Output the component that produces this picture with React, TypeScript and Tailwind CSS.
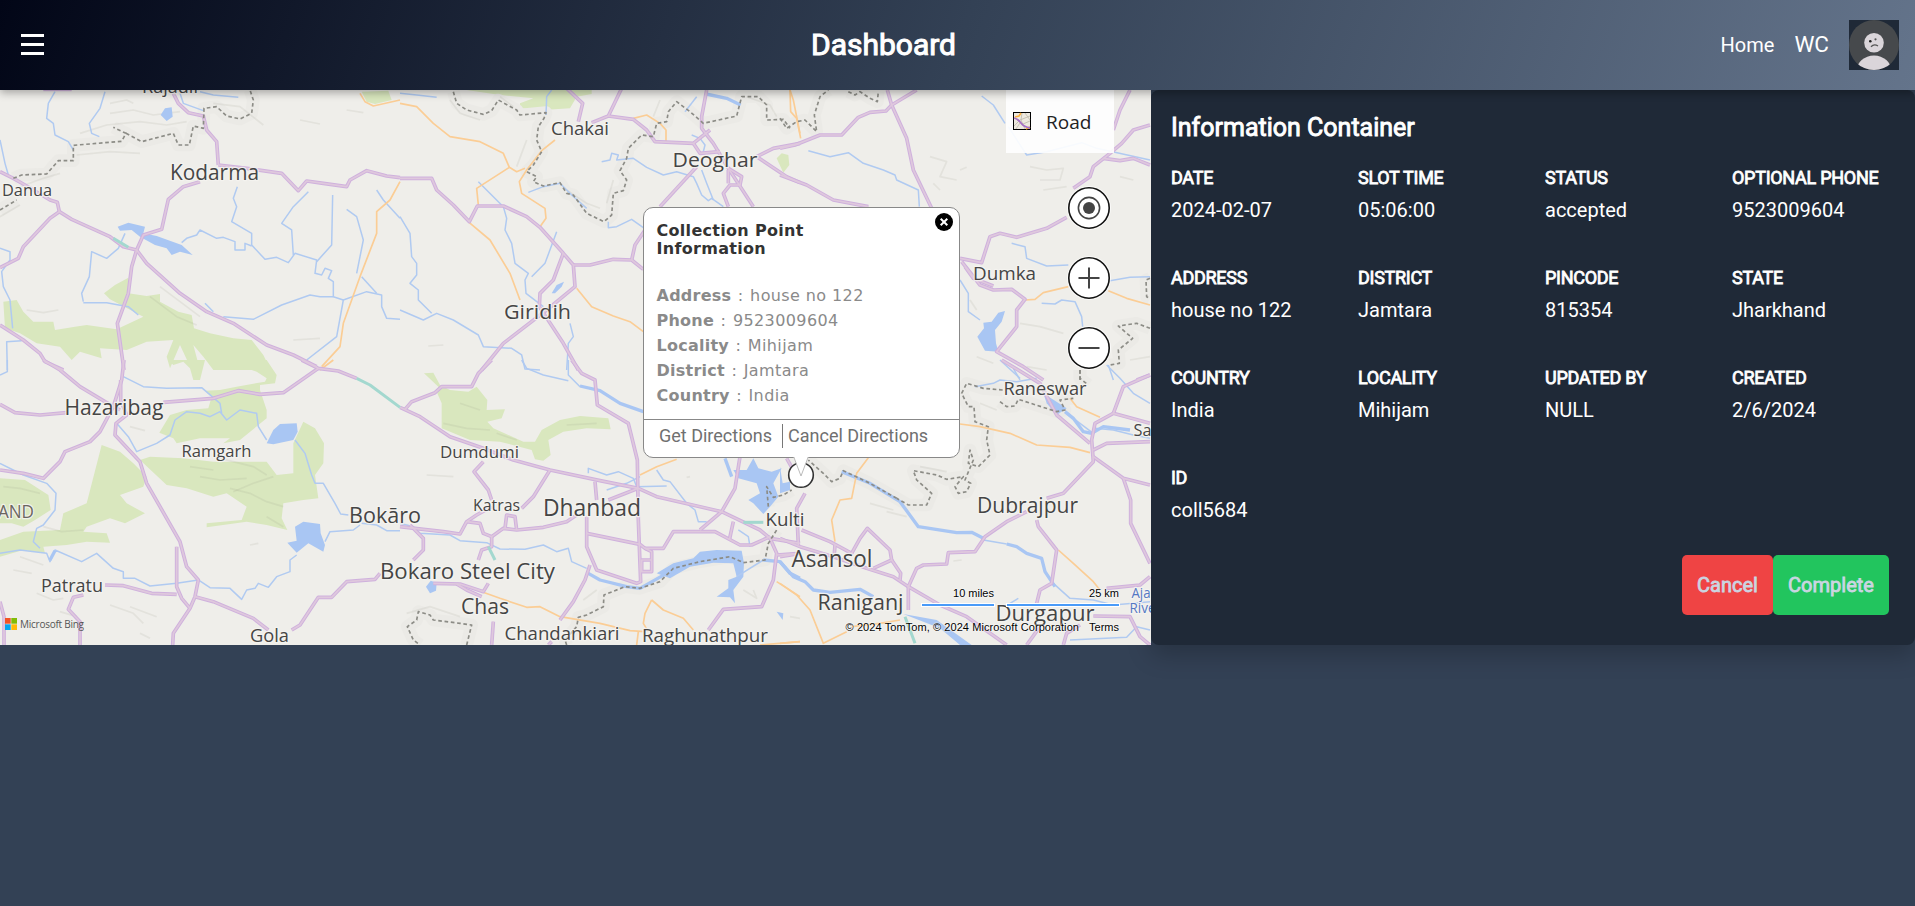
import React from "react";

type Tile = {
  x: number;
  y: number;
  parks?: string[];
  lakes?: string[];
  rivers?: string[];
  wideRivers?: string[];
  minor?: string[];
  roads?: string[];
  motorway?: string[];
  borders?: string[];
  relief?: string[];
};

/* Map geometry, one entry per tile. Tile units are a third of a pixel. */
const tiles: Tile[] = [
  {
    x: 0,
    y: 0,
    relief: [
      "M330 340 L400 330 460 345 540 335",
      "M240 400 L320 375 420 365 500 375 560 365",
      "M330 310 L380 300 400 310",
      "M230 465 L330 455 420 460",
      "M60 560 L130 535 180 520",
      "M0 650 L60 615",
      "M640 310 L720 320 790 375",
      "M80 930 L130 938 175 930",
      "M480 860 L560 920 600 950",
      "M450 890 L530 950 590 975",
      "M900 360 L960 372",
      "M1040 330 L1090 338",
      "M880 1020 L960 1015",
    ],
    parks: [
      "M312 880 L345 855 385 833 390 865 385 880 440 888 480 882 480 905 535 935 575 945 582 985 630 1000 700 1015 755 1020 790 1065 812 1110 L640 1110 610 1070 580 1035 600 1110 575 1110 540 1035 510 1105 500 1070 520 1020 440 1025 380 1050 300 1045 305 1075 240 1055 215 1080 180 1040 110 1030 60 1000 15 985 10 905 50 900 70 935 100 965 160 965 165 990 225 980 260 975 350 988 430 950 330 898Z",
      "M1085 275 L1100 305 1125 312 1175 300 1165 272Z",
    ],
    lakes: [
      "M482 345 L495 325 515 322 518 350 500 363Z",
      "M353 680 L385 668 435 680 430 700 470 708 545 735 578 765 540 755 515 765 500 745 465 735 420 710 395 690 360 692Z",
    ],
    rivers: [
      "M165 275 L145 310 140 355 160 370 165 405 205 425 220 450",
      "M315 275 L300 325 268 370 275 400 298 410",
      "M540 280 L550 310 610 332",
      "M0 420 L15 490 25 525",
      "M0 745 L30 755 30 780 5 815 10 860 30 900 38 985",
      "M65 1022 L20 1025 22 1110",
      "M375 700 L355 745 320 775 275 755 268 830 245 880 250 905",
      "M250 908 L320 908 385 920 415 945",
      "M600 275 L640 285 715 292",
      "M545 728 L560 715 590 705 600 690 650 715 670 712 705 725 705 750 735 750 735 730 755 738",
      "M712 560 L700 595 710 620 695 665 755 700 755 735 795 778 830 772 865 788 885 760 950 780 945 820 965 825 975 805 995 812 985 835 1000 845 1000 890 1030 900 1100 875 1145 885 1145 920 1160 955 1200 958",
      "M925 575 L880 620 845 670 875 690 880 765",
      "M998 585 L995 735 950 785",
      "M1040 628 L1070 650 1090 720 1070 820",
      "M1130 570 L1150 600 1200 655",
      "M670 950 L760 958 845 915 930 885 960 890 1000 890",
      "M1030 900 L1010 1010 920 1080",
      "M1085 830 L1130 880",
      "M615 910 L640 935",
    ],
    minor: [
      "M1080 280 L1095 305 1120 318 1200 300",
      "M1200 545 L1170 600 1130 635 1130 700 1080 830 1030 970 1020 1040 965 1100",
    ],
    roads: [
      "M0 515 L40 535 75 555 150 600 172 607 178 635 215 658 330 710 370 740 410 750",
      "M178 635 L150 655 70 740 55 775 0 803",
      "M520 280 L535 310 565 338 610 348 620 390 650 425 655 495",
      "M600 545 L550 560 505 598 485 688 430 705 410 750",
      "M410 750 L395 800 385 880 352 970 372 1110",
      "M410 750 L440 790 540 880 620 935 700 970 800 1035 880 1065 950 1100",
      "M655 495 L740 505 845 520 895 572 920 543 970 550 1040 560 1050 540 1100 512 1160 528 1200 533",
      "M0 975 L70 1020 120 1060 135 1085 190 1110",
      "M130 268 L215 268",
    ],
    motorway: ["M340 715 L385 742"],
    borders: [
      "M0 630 L50 600",
      "M40 535 L65 525 140 522 175 482 220 482 220 436 365 424 378 400 340 382",
      "M378 400 L425 425 520 400 535 435 568 435 580 378 610 385 612 325 650 320 680 348 720 357 755 340 760 300 750 270",
    ],
  },
  {
    x: 400,
    y: 80,
    relief: [
      "M150 60 L180 100 240 120",
      "M380 180 L350 260",
      "M500 330 L560 370 600 385",
      "M640 300 L620 370",
      "M780 60 L760 110",
      "M340 80 L300 50",
      "M1040 50 L1110 75 1130 110",
      "M85 798 L130 795",
    ],
    parks: [
      "M200 30 L575 30 575 42 530 50 510 85 430 90 360 85 360 70 400 55 300 45Z",
      "M1130 235 L1145 220 1165 225 1168 255 1150 278Z",
    ],
    lakes: ["M455 640 L470 615 492 605 485 620 465 640Z"],
    rivers: [
      "M0 40 L50 45 110 52",
      "M455 30 L440 50 438 105",
      "M605 245 L630 240 635 220 655 225 650 240 700 235 740 262 790 285 830 275 880 290 890 310 905 345 925 362 935 355 970 380",
      "M905 270 L920 310 940 360",
      "M875 165 L900 175 915 195 910 215",
      "M385 337 L430 320 480 310 515 345 560 385",
      "M625 425 L625 443 650 440 695 418 730 443",
      "M235 305 L310 380 320 415 315 450 335 490 345 550 385 580 375 600 378 640 430 680",
      "M470 455 L435 550 395 590",
      "M0 410 L30 460 35 530 50 550 50 585 30 610 55 630 55 660 95 700",
      "M0 690 L70 720 110 700 160 720 235 765 250 800 335 805 365 825 375 867 420 870",
      "M510 730 L520 770 505 790 500 870",
      "M890 50 L855 95",
    ],
    wideRivers: ["M918 42 L980 55 1022 75"],
    minor: [
      "M0 70 L50 80 100 130 150 170 240 185 310 220 328 262 230 325 235 375",
      "M328 262 L350 275 375 265",
      "M465 180 L425 212 380 270 358 305 365 340 435 385 438 415 420 440",
      "M208 428 L270 480 330 580 360 660",
      "M700 115 L740 105 780 130 798 150 798 185",
      "M530 625 L575 680 640 708 690 725 730 755",
      "M1170 30 L1180 60 1200 160",
    ],
    roads: [
      "M0 295 L95 295 110 330 160 375 208 425 232 378 310 378 380 410 420 442 490 520 520 555 525 620 440 690 310 790 245 870",
      "M490 520 L460 600 420 640 418 680 490 790 535 870",
      "M520 555 L570 555 640 538 695 540 730 568",
      "M695 540 L705 495 735 450",
      "M500 25 L548 70 535 125",
      "M665 25 L625 108 575 128",
      "M625 108 L700 118 740 150 765 185 880 190 930 150",
      "M920 30 L905 110 905 145 940 190 985 265 1060 380",
      "M890 260 L780 380",
      "M985 265 L1025 290 1020 315 990 315 970 340 985 380",
      "M985 270 L985 310",
      "M1070 230 L1120 205 1200 190",
      "M1070 230 L1160 290 1200 308",
      "M880 190 L900 220 960 215",
    ],
    borders: [
      "M160 35 L170 70 200 90 250 103 275 92 295 60 350 90 360 105 438 98 432 115 415 140 410 180 425 215 400 255 380 275 410 290 400 305 430 318 480 308 500 340 520 345 560 400 612 425 635 405 640 340 670 332 680 300 660 272 680 235 685 205 725 165 760 170 770 130 800 125 805 95 830 65 870 95 910 130 1010 108 1025 50 1075 50 1100 75 1100 120 1150 118 1170 145",
    ],
  },
  {
    x: 0,
    y: 360,
    relief: [
      "M60 590 L130 615",
      "M640 290 L760 320 800 345",
      "M600 350 L660 360 740 355",
      "M700 395 L760 370 820 350",
      "M690 385 L750 400 800 425 850 440",
      "M570 320 L640 330",
      "M800 470 L850 500",
      "M750 555 L775 550",
      "M180 755 L230 770",
      "M330 735 L400 760 430 790",
      "M390 740 L470 770",
      "M420 820 L450 835",
      "M130 500 L185 515 250 510",
      "M10 380 L60 385 120 400",
      "M390 200 L435 212",
      "M110 700 L160 720 190 715",
      "M40 630 L95 640",
    ],
    parks: [
      "M505 0 L520 15 550 5 570 25 580 60 600 60 615 0Z",
      "M640 0 L660 20 720 18 770 35 800 55 795 65 710 80 660 90 615 92 635 110 625 145 560 150 510 165 478 218 520 235 530 250 600 235 690 235 670 250 720 240 800 175 800 150 780 90 780 75 825 70 830 45 800 0Z",
      "M305 255 L360 275 400 310 440 350 430 380 360 405 380 430 435 460 375 490 330 475 260 500 250 515 320 520 330 548 260 545 200 555 130 560 135 580 70 570 0 590 0 540 70 515 180 510 190 460 260 430Z",
      "M420 300 L450 290 550 295 640 305 800 305 830 345 880 340 880 250 910 185 945 205 972 250 970 310 945 345 955 415 910 420 850 430 845 475 862 510 800 495 740 485 620 502 620 490 725 480 740 440 680 400 640 410 560 385 500 375Z",
      "M0 355 L75 360 145 405 152 450 105 480 70 500 35 490 0 490Z",
    ],
    lakes: [
      "M800 250 L820 210 840 192 890 190 893 215 880 240 820 253Z",
      "M862 548 L890 542 885 500 910 485 960 492 962 520 975 555 970 575 925 550 890 578Z",
    ],
    rivers: [
      "M0 45 L22 35 22 0",
      "M370 50 L430 80 500 85 605 83 660 130 665 160",
      "M350 190 L385 230 410 275 470 250 510 225 525 180 560 155 600 160 630 170 660 155 680 180 720 150 770 160 775 200 800 240",
      "M885 240 L915 280 935 345 945 370 970 370 1005 430 1022 462 1045 465",
      "M1080 495 L1060 510 990 515 975 545",
      "M0 310 L70 345 140 370 168 400 165 450 130 495 110 505 100 545 120 565",
      "M0 580 L60 570 140 580 150 605 165 570 245 605 290 580 340 625 370 635 370 655 405 655 450 678 530 670 595 660 630 683 690 685 725 718 740 690 765 685 775 670 805 682 830 650 870 635 870 600 890 585",
      "M1085 490 L1130 495 1160 512 1200 512",
    ],
    wideRivers: ["M165 572 L150 600"],
    minor: ["M1000 0 L960 30"],
    roads: [
      "M130 0 L180 30 240 80 315 125 360 150",
      "M372 0 L365 60 340 140 300 215 270 245 195 275 180 305 130 355 70 340 0 330",
      "M362 60 L362 120 380 165 348 190 345 225 420 305 440 370 480 440 540 545 560 620 595 660 585 710 570 745 520 820 518 855",
      "M0 133 L45 158 120 165 200 158",
      "M490 127 L640 115 715 92 780 103 850 98 955 25",
      "M905 0 L955 25 1015 33 1070 55",
      "M530 560 L530 680 545 715 570 745",
      "M315 675 L370 677 455 700 530 703",
      "M585 710 L640 725 760 775 805 810",
      "M250 705 L220 712 205 748 240 785 240 855",
      "M0 725 L12 770 12 855",
      "M875 810 L900 795 955 712 995 712 1040 665 1125 658 1140 640",
    ],
    motorway: ["M1070 55 L1110 75 1200 142"],
  },
  {
    x: 400,
    y: 360,
    relief: [
      "M130 190 L200 205 270 210",
      "M180 130 L240 150",
      "M290 220 L350 240",
      "M500 195 L590 190",
      "M80 345 L160 350",
      "M860 352 L870 350",
      "M1030 690 L1070 715 1060 690",
      "M20 760 L90 740 180 770",
      "M590 690 L550 720",
    ],
    parks: [
      "M72 40 L100 38 120 75 150 90 205 95 230 80 262 120 260 150 315 148 305 175 262 185 280 205 370 245 405 245 425 210 480 180 540 168 625 175 632 208 560 205 490 215 445 240 452 285 430 302 405 298 395 270 300 245 210 240 125 205 125 130 110 95 115 80Z",
    ],
    lakes: [
      "M1000 330 L1040 330 1060 295 1075 325 1115 335 1145 325 1120 370 1135 410 1110 440 1090 462 1060 430 1045 420 1080 400 1070 370 1015 355Z",
      "M770 640 L820 610 880 595 900 575 950 570 1025 572 1032 610 1030 650 1000 690 1005 730 990 712 950 710 985 685 985 660 1010 650 1000 610 940 608 870 620 810 655Z",
      "M78 680 L92 662 110 668 108 692 90 700Z",
      "M1130 755 L1150 760 1148 780Z",
    ],
    rivers: [
      "M365 0 L380 25 430 45 505 62",
      "M505 0 L505 45 540 80",
      "M0 490 L40 500 60 520 150 525 180 542 260 548 300 567 375 568 430 555 470 575 505 565 515 605 560 625",
      "M1015 510 L1045 530 1050 560",
      "M565 340 L565 325 620 345 655 335 700 355 710 380 800 378",
      "M620 390 L680 370 720 350",
      "M770 330 L790 360 810 365 860 430 885 450 895 485 920 485",
      "M1010 650 L1090 600",
    ],
    wideRivers: [
      "M540 78 L600 92 660 130 730 155",
      "M565 640 L600 660 680 680 720 685 800 640",
      "M975 295 L995 350",
      "M1090 600 L1140 605 1170 640 1200 655",
    ],
    minor: [
      "M720 345 L770 320 830 298",
      "M245 695 L300 715 380 742 420 740 480 770 600 790 690 812 735 815",
      "M715 815 L710 855",
      "M755 720 L735 760 730 790 745 815",
      "M755 720 L790 750 850 775 880 810",
      "M1130 665 L1200 710",
      "M1080 855 L1200 845",
    ],
    roads: [
      "M275 0 L235 40 215 80 125 80 105 98 35 125 15 148",
      "M0 142 L60 170 150 230 250 265 340 300 450 330 600 362 715 385 770 410 965 455 1080 510 1110 535 1200 550",
      "M515 0 L545 40 585 60 592 135 685 190 712 300 715 480 722 665 710 670 590 630 560 560 560 470",
      "M250 305 L222 335 265 390 275 420",
      "M450 330 L400 410 365 445",
      "M585 365 L590 420",
      "M715 385 L625 420",
      "M0 500 L70 508 130 515 180 522 200 485 230 465 275 440",
      "M200 485 L240 490 250 520 275 530 310 505 350 510 430 502 500 485 530 465",
      "M315 505 L320 465 345 470 350 510",
      "M275 530 L275 560 245 570 235 600",
      "M30 495 L70 535 70 570 40 600",
      "M560 520 L720 553 735 565 755 575 755 635 725 635 725 600 755 600",
      "M735 565 L790 565 820 515 945 515 1020 555 1055 555 1110 530",
      "M965 455 L900 510",
      "M1000 485 L988 540",
      "M570 615 L555 660 520 725 480 780",
      "M1020 290 L1005 385 965 455",
      "M1110 535 L1130 580 1120 660 1085 740 970 748 925 810",
      "M1130 585 L1200 580",
      "M100 670 L180 672 250 695 265 670",
      "M170 672 L200 690 245 710",
      "M280 785 L275 855",
      "M445 855 L455 845",
      "M1160 295 L1180 330",
    ],
    motorway: ["M265 560 L285 600", "M1030 487 L1090 487"],
    borders: [
      "M200 855 L215 795 180 790 100 780 90 765 55 755 50 780 22 800 40 840 60 855",
      "M500 855 L495 840 530 800 535 772 560 765 610 740 612 705 675 680 720 685 780 665 820 625 900 605 990 590 1030 608 1095 600 1105 550 1130 510",
      "M1105 440 L1100 380 1120 412 1150 405 1175 390",
    ],
  },
  {
    x: 780,
    y: 80,
    relief: [
      "M450 230 L500 245 480 290 530 300",
      "M460 310 L480 330",
      "M540 270 L560 262",
      "M750 260 L800 270 850 265 840 300 780 300",
      "M790 330 L860 320",
      "M1020 290 L1060 300",
      "M570 660 L590 690",
      "M720 730 L780 740 850 760",
      "M590 830 L640 850",
      "M740 860 L800 870",
      "M1050 840 L1110 830",
    ],
    lakes: [
      "M592 770 L612 745 610 728 635 725 655 698 675 693 665 725 645 750 648 790 655 815 615 812Z",
    ],
    rivers: [
      "M85 212 L150 230 205 218 250 250 310 270 345 285 350 300 415 330 418 380",
      "M540 600 L565 640 565 695 600 720",
      "M695 490 L735 500 740 535 800 558 865 555",
      "M785 670 L825 672 845 660 885 665 905 710 908 740",
      "M990 602 L1050 592 1110 590",
      "M685 140 L740 225 800 215 905 188 950 205 1110 240",
      "M605 48 L640 75 675 130",
      "M700 865 L720 900",
      "M985 855 L1000 900",
    ],
    minor: [
      "M30 30 L32 95 50 115 62 175",
      "M735 660 L765 658 790 638 865 620",
      "M985 632 L1040 655 1110 675",
    ],
    roads: [
      "M0 205 L45 195 120 165 185 165 235 112 270 97 318 93 335 75 410 30",
      "M322 30 L335 75 380 175 400 270 455 385",
      "M0 285 L80 315 160 360 265 380",
      "M540 535 L605 548 630 470 660 460 710 472 800 445 860 412",
      "M545 545 L600 615 640 630 695 628 735 658 710 690 710 740 650 815 730 860 790 900",
      "M555 560 L580 595 640 618",
      "M1050 30 L1020 90 1000 150",
      "M1110 135 L1060 150 1025 190 990 220 940 260 930 290 880 325",
      "M970 235 L1020 242 1060 235 1110 255",
      "M1070 900 L1110 885",
    ],
    borders: [
      "M0 115 L20 145 50 125 75 120 110 155 103 105 120 50 145 30",
      "M205 35 L225 45 240 35 270 55 292 65 295 35",
      "M1110 745 L1070 730 1015 738 1058 775 1015 810 1018 850 990 855",
      "M900 870 L900 900",
      "M1110 595 L1098 600 1100 650 1110 655",
    ],
  },
  {
    x: 780,
    y: 360,
    relief: [
      "M270 430 L340 450",
      "M320 455 L380 470",
      "M520 603 L545 600",
      "M30 770 L60 775",
      "M420 320 L500 335",
      "M600 130 L650 150",
    ],
    lakes: [
      "M0 320 L8 370 30 365 30 390 0 400Z",
      "M790 100 L860 145 830 165 800 130Z",
      "M370 762 L470 780 575 855 540 855 480 805Z",
    ],
    rivers: [
      "M585 80 L640 70 660 60 710 65 770 55",
      "M660 0 L720 55",
      "M980 15 L1020 55 1060 100 1110 130",
      "M860 160 L900 190 940 220",
      "M610 540 L680 552",
      "M945 205 L1000 210 1060 225 1110 235",
      "M820 670 L870 715 940 720 1000 735 1110 725",
      "M870 840 L1040 832 1070 800 1110 810",
      "M690 730 L715 715",
    ],
    wideRivers: [
      "M185 335 L270 370 360 425 415 500 530 518 575 517 610 535",
      "M680 552 L710 560 740 580 785 595 795 635 825 680",
      "M0 605 L40 650 75 665 100 690 150 697 240 688 280 710",
      "M855 155 L880 175 910 215 935 220 970 200 1050 210",
    ],
    minor: [
      "M540 192 L600 200 690 220 770 255 870 262 930 278",
      "M870 115 L890 140 960 172",
      "M265 293 L230 340 215 415 180 420 155 480 165 545",
      "M835 570 L880 610 940 665 960 690",
      "M0 670 L50 705 90 750 130 850 200 815",
      "M0 850 L60 845",
      "M215 800 L300 790 360 780",
    ],
    roads: [
      "M0 535 L60 560 160 590 260 625 340 650 385 680 480 735 560 770 680 855",
      "M65 510 L150 545 215 580 240 535 262 505 330 570 335 600 280 625",
      "M335 600 L362 640 360 660",
      "M75 400 L50 445 55 555",
      "M385 680 L410 625 430 615 500 612 505 578 585 575 615 530 680 485 740 455",
      "M385 680 L385 750",
      "M800 415 L850 400 940 305 935 240 945 190 1000 160 1110 190",
      "M1110 45 L1030 80 1000 160",
      "M665 0 L780 70 830 165 930 250",
      "M940 270 L980 250 1110 245",
      "M940 290 L1030 355 1110 375",
      "M1030 355 L1052 420 1052 490 1110 610",
      "M770 480 L775 500 830 570 815 670 780 690 770 730",
      "M940 768 L1050 770 1080 830 1110 855",
      "M740 855 L780 800",
      "M850 855 L860 820 900 795",
      "M980 685 L1080 675 1110 650",
      "M0 590 L60 580",
      "M165 555 L162 595",
    ],
    motorway: ["M375 770 L405 850"],
    borders: [
      "M668 90 L610 85 560 70 545 100 565 140 582 140 585 185 625 200 620 240 630 285 595 320 565 310 570 270 580 300 555 360 572 370 560 395 535 400 525 380 550 350 500 358 470 345 400 332 410 360 455 400 440 435 385 435 350 415",
      "M350 415 L270 370 190 332 180 355 155 365 130 340 85 300",
      "M660 125 L680 140 705 138 715 118 830 155 855 150 840 120 880 115",
      "M900 30 L900 55 925 75",
    ],
  },
];

type Label = [text: string, x: number, y: number, size: number, width: number, color?: string];

const labels: Label[] = [
  ["Rajauli", 142, 92.5, 18, 56],
  ["Kodarma", 170, 180, 21, 89],
  ["Danua", 2, 196, 17, 50],
  ["Chakai", 551, 135, 18.5, 58],
  ["Deoghar", 672.5, 167, 20.5, 85],
  ["Giridih", 504, 319, 20.5, 67],
  ["Hazaribag", 64.5, 415, 21.5, 99],
  ["Ramgarh", 181.5, 456.5, 16.5, 70],
  ["AND", -2, 518, 18, 36, "#6b665f"],
  ["Bokāro", 349, 523, 21, 72],
  ["Patratu", 41, 592, 18.5, 62],
  ["Gola", 250, 642, 18, 39],
  ["Bokaro Steel City", 380, 578.5, 21, 175],
  ["Dumdumi", 440, 458, 16.5, 79],
  ["Katras", 473, 511, 16, 47],
  ["Dhanbad", 543, 516, 23, 98],
  ["Chas", 461, 614, 21.5, 48],
  ["Chandankiari", 504.5, 639.5, 18.5, 115],
  ["Raghunathpur", 642, 642, 18, 126],
  ["Kulti", 765.5, 525.5, 18, 39],
  ["Asansol", 791.5, 567, 23, 81],
  ["Raniganj", 817.5, 610, 21, 86],
  ["Dumka", 973, 280, 19, 63],
  ["Raneswar", 1003.5, 395, 19, 83],
  ["Sa", 1133.5, 436, 17, 18],
  ["Dubrajpur", 977, 512.5, 21, 101],
  ["Durgapur", 995.5, 620.5, 22, 99],
  ["Aja", 1131.5, 598, 15, 19, "#5478c4"],
  ["Rive", 1129.5, 613, 15, 26, "#5478c4"],
];

function Strokes({ pick, color, width, dash }: { pick: (t: Tile) => string[] | undefined; color: string; width: number; dash?: string }) {
  return (
    <g fill="none" stroke={color} strokeWidth={width} strokeDasharray={dash} strokeLinejoin="round">
      {tiles.map((t, i) => (
        <g key={i} transform={`translate(${t.x} ${t.y}) scale(0.33333)`}>
          {(pick(t) ?? []).map((d) => (
            <path key={d} d={d} />
          ))}
        </g>
      ))}
    </g>
  );
}

function Areas({ pick, color }: { pick: (t: Tile) => string[] | undefined; color: string }) {
  return (
    <g fill={color}>
      {tiles.map((t, i) => (
        <g key={i} transform={`translate(${t.x} ${t.y}) scale(0.33333)`}>
          {(pick(t) ?? []).map((d) => (
            <path key={d} d={d} />
          ))}
        </g>
      ))}
    </g>
  );
}

function MapDrawing() {
  return (
    <svg className="block h-full w-full" viewBox="0 90 1151 555" aria-hidden="true">
      <rect x="0" y="90" width="1151" height="555" fill="#efeeea" />
      <Areas pick={(t) => t.parks} color="#d9e7be" />
      <Strokes pick={(t) => t.borders} color="#ebeae6" width={38} />
      <Strokes pick={(t) => t.relief} color="#8f8f7c20" width={5} />
      <Areas pick={(t) => t.lakes} color="#a9c6f3" />
      <Strokes pick={(t) => t.rivers} color="#b0caf1" width={4.5} />
      <Strokes pick={(t) => t.wideRivers} color="#a9c6f3" width={10} />
      <Strokes pick={(t) => t.minor} color="#fbcd95" width={5} />
      <Strokes pick={(t) => t.roads} color="#cfb1dd" width={11} />
      <Strokes pick={(t) => t.roads} color="#dfc8dd" width={5} />
      <Strokes pick={(t) => t.motorway} color="#a3d8cf" width={9} />
      <Strokes pick={(t) => t.borders} color="#8c8c86" width={5} dash="11 8" />
      <g fontFamily="'Open Sans', 'Noto Sans', sans-serif" fontWeight="500" paintOrder="stroke" stroke="#f5f4f1" strokeOpacity="0.85" strokeWidth="2.5" strokeLinejoin="round">
        {labels.map(([text, x, y, size, width, color]) => (
          <text key={text} x={x} y={y} fontSize={size} textLength={width} lengthAdjust="spacingAndGlyphs" fill={color ?? "#454545"}>
            {text}
          </text>
        ))}
      </g>
    </svg>
  );
}

function RoundControl({ children }: { children: React.ReactNode }) {
  return (
    <button className="size-[42px] rounded-full shadow-[0_0_0_1px_#ffffffb0]">
      <svg viewBox="0 0 42 42" className="block size-full">
        <circle cx="21" cy="21" r="20.2" fill="#fff" stroke="#111" strokeWidth="1.6" />
        {children}
      </svg>
    </button>
  );
}

const popupRows = [
  ["Address", "house no 122"],
  ["Phone", "9523009604"],
  ["Locality", "Mihijam"],
  ["District", "Jamtara"],
  ["Country", "India"],
];

function Infobox() {
  return (
    <div className="absolute left-[643px] top-[117px] h-[251px] w-[317px]">
      <div className="flex h-full flex-col rounded-[10px] border border-[#888] bg-white">
        <div className="h-[211px] px-[12.5px] pt-[14px] font-['DejaVu_Sans',Verdana,sans-serif]">
          <div className="w-[180px] text-[16px] font-bold leading-[18px] tracking-[0.3px] text-[#333]">Collection Point Information</div>
          <div className="mt-[25px] text-[16px] leading-[25px] tracking-[0.4px] text-[#8a8a8a]">
            {popupRows.map(([k, v]) => (
              <div key={k}>
                <b className="tracking-[0.25px]">{k}</b>
                <span className="[word-spacing:1px]"> : </span>
                {v}
              </div>
            ))}
          </div>
        </div>
        <div className="flex flex-1 items-start border-t border-[#888] pl-[15px] pt-[4px] text-[18px] leading-6 text-[#707070]">
          <span className="border-r border-[#777] pr-[10px]">Get Directions</span>
          <span className="pl-[5px]">Cancel Directions</span>
        </div>
      </div>
      <svg className="absolute right-[7px] top-[6px] size-[18px]" viewBox="0 0 18 18">
        <circle cx="9" cy="9" r="9" fill="#000" />
        <path d="M5.7 5.7 L12.3 12.3 M12.3 5.7 L5.7 12.3" stroke="#fff" strokeWidth="2" />
      </svg>
      <svg className="absolute left-[143px] top-[249px] h-[34px] w-[30px]" viewBox="0 0 30 34">
        <circle cx="15" cy="19" r="12.3" fill="#fff" stroke="#333" strokeWidth="1.6" />
        <path d="M7.5 0 L15 20 L22.5 0Z" fill="#fff" />
        <path d="M7.8 1 L15 20 L22.2 1" fill="none" stroke="#bbb" strokeWidth="1" />
      </svg>
    </div>
  );
}

function MapPanel() {
  return (
    <section className="relative h-[555px] w-[1151px] shrink-0 overflow-hidden">
      <MapDrawing />
      <div className="absolute left-[1006px] top-0 flex h-[63px] w-[108px] bg-white/90 pl-[7px] pt-[22px]">
        <svg className="size-[18px]" viewBox="0 0 18 18">
          <rect x="0.5" y="0.5" width="17" height="17" fill="#eee9df" stroke="#000" />
          <path d="M1 14 L7 8 L17 4 M9 1 L8 8 L12 17 M3 17 L7 11 M12 1 L17 8 M10 12 L17 9" stroke="#bdb9a8" fill="none" strokeWidth="0.8" />
          <path d="M2 5 L6 4 L8 1 M13 17 L17 15" stroke="#fbb040" strokeWidth="1.6" fill="none" />
          <path d="M1 6 Q5 7 8 11 T17 16" stroke="#a66fc4" strokeWidth="1.8" fill="none" />
        </svg>
        <span className="-mt-[4px] ml-[15px] font-['Open_Sans','Noto_Sans',sans-serif] text-[19px] leading-[28px] text-[#222]">Road</span>
      </div>
      <div className="absolute left-[1068px] top-[97px] flex flex-col gap-[28px]">
        <RoundControl>
          <circle cx="21" cy="21" r="10.6" fill="none" stroke="#444" strokeWidth="1.6" />
          <circle cx="21" cy="21" r="6" fill="#444" />
        </RoundControl>
        <RoundControl>
          <path d="M10.5 21 H31.5 M21 10.5 V31.5" stroke="#444" strokeWidth="2" />
        </RoundControl>
        <RoundControl>
          <path d="M10.5 21 H31.5" stroke="#444" strokeWidth="2" />
        </RoundControl>
      </div>
      <div className="absolute left-[5px] top-[527px] flex items-center gap-[3px]">
        <svg className="size-[12px]" viewBox="0 0 12 12">
          <path d="M0 0H5.7V5.7H0Z" fill="#f35325" />
          <path d="M6.3 0H12V5.7H6.3Z" fill="#81bc06" />
          <path d="M0 6.3H5.7V12H0Z" fill="#05a6f0" />
          <path d="M6.3 6.3H12V12H6.3Z" fill="#ffba08" />
        </svg>
        <span className="font-['Open_Sans','Noto_Sans',sans-serif] text-[10px] leading-[14px] tracking-[-0.25px] text-[#555]">Microsoft Bing</span>
      </div>
      <div className="absolute bottom-[11px] right-[31px] flex flex-col items-end font-['Liberation_Sans',Arial,sans-serif] text-[11px] leading-[13px] text-black [text-shadow:0_0_2px_#fff,0_0_2px_#fff]">
        <div className="flex gap-[11px] text-right">
          <div className="w-[74px]">
            <div className="pr-[1px]">10 miles</div>
            <div className="mt-[3px] h-[4px] border border-white bg-[#4a9bf8]" />
          </div>
          <div className="w-[114px]">
            <div className="pr-[1px]">25 km</div>
            <div className="mt-[3px] h-[4px] border border-white bg-[#4a9bf8]" />
          </div>
        </div>
        <div className="mt-[14px] flex gap-[10px] pr-[1px]">
          <span className="tracking-[0.08px]">© 2024 TomTom, © 2024 Microsoft Corporation</span>
          <span>Terms</span>
        </div>
      </div>
      <Infobox />
    </section>
  );
}

const fields = [
  ["DATE", "2024-02-07"],
  ["SLOT TIME", "05:06:00"],
  ["STATUS", "accepted"],
  ["OPTIONAL PHONE", "9523009604"],
  ["ADDRESS", "house no 122"],
  ["DISTRICT", "Jamtara"],
  ["PINCODE", "815354"],
  ["STATE", "Jharkhand"],
  ["COUNTRY", "India"],
  ["LOCALITY", "Mihijam"],
  ["UPDATED BY", "NULL"],
  ["CREATED", "2/6/2024"],
  ["ID", "coll5684"],
];

function InfoPanel() {
  return (
    <section className="flex h-[555px] flex-1 flex-col rounded-lg bg-[#1f2937] px-5 pt-5 text-white shadow-[0_10px_25px_rgba(0,0,0,0.22)]">
      <h2 className="text-[25px] leading-[36px] [-webkit-text-stroke:0.9px_white]">Information Container</h2>
      <dl className="mt-[18px] grid grid-cols-4 gap-6">
        {fields.map(([label, value]) => (
          <div key={label} className="h-[76px] whitespace-nowrap">
            <dt className="text-[18px] leading-[28px] tracking-[-0.28px] [-webkit-text-stroke:0.8px_white]">{label}</dt>
            <dd className="mt-[4px] text-[20px] leading-[28px]">{value}</dd>
          </div>
        ))}
      </dl>
      <div className="mt-[15px] flex justify-end pr-[6px] text-[20px] text-slate-300">
        <button className="h-[60px] w-[91px] rounded-[5px] bg-[#ef4444] [-webkit-text-stroke:0.8px_#cbd5e1]">Cancel</button>
        <button className="h-[60px] w-[116px] rounded-[5px] bg-[#22c55e] [-webkit-text-stroke:0.8px_#cbd5e1]">Complete</button>
      </div>
    </section>
  );
}

function Header() {
  return (
    <header className="relative z-10 grid h-[90px] grid-cols-3 items-center bg-[linear-gradient(110deg,#020617,#334155,#64748b)] text-white shadow-[0_3px_8px_rgba(0,0,0,0.3)]">
      <button className="mb-[2px] ml-[21px] flex w-[23px] flex-col gap-[6px]" aria-label="Menu">
        <span className="h-[3px] w-full bg-white" />
        <span className="h-[3px] w-full bg-white" />
        <span className="h-[3px] w-full bg-white" />
      </button>
      <h1 className="relative -left-[74px] text-center text-[30px] leading-[40px] [-webkit-text-stroke:1px_white]">Dashboard</h1>
      <nav className="flex items-center justify-end pr-4 text-[20px]">
        <a className="mr-5">Home</a>
        <a className="mr-5 text-[22.5px]">WC</a>
        <svg className="size-[50px]" viewBox="0 0 50 50">
          <rect width="50" height="50" fill="#1f2937" />
          <clipPath id="avatar">
            <circle cx="25" cy="25" r="25" />
          </clipPath>
          <g clipPath="url(#avatar)">
            <rect width="50" height="50" fill="#46494c" />
            <circle cx="25" cy="22.7" r="9.8" fill="#dad5da" />
            <ellipse cx="25" cy="51" rx="17.5" ry="15.5" fill="#dad5da" />
          </g>
          <circle cx="21.3" cy="21.3" r="1.3" fill="#222" />
          <circle cx="26.5" cy="19.3" r="1.1" fill="#555" />
          <path d="M22 26.8 Q25 23.5 29 26" fill="none" stroke="#555" strokeWidth="1.3" />
        </svg>
      </nav>
    </header>
  );
}

export default function App() {
  return (
    <div className="flex h-[906px] flex-col overflow-hidden bg-[#334155] font-[Roboto,sans-serif]">
      <Header />
      <main className="flex">
        <MapPanel />
        <InfoPanel />
      </main>
    </div>
  );
}
